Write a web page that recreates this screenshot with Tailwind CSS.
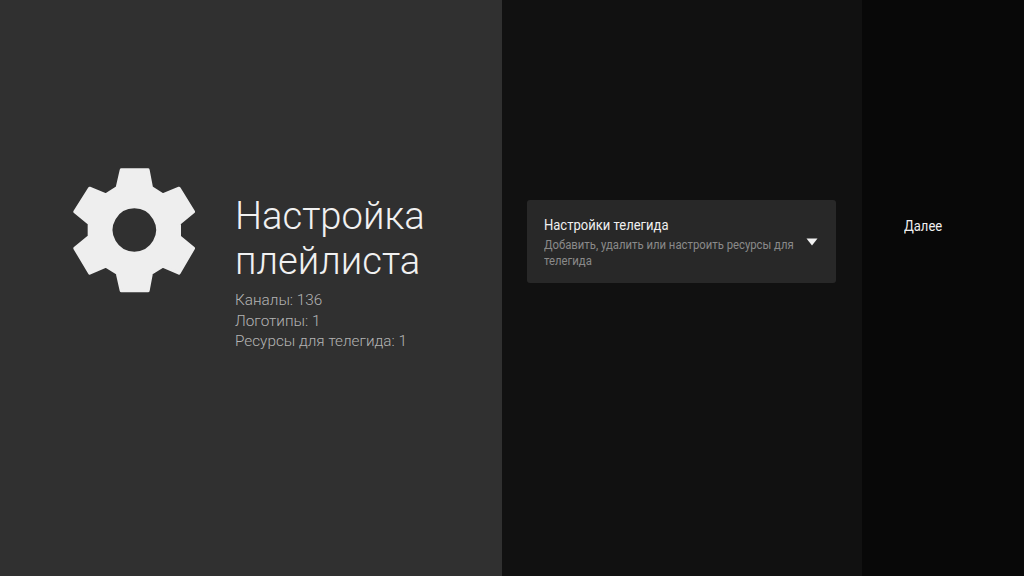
<!DOCTYPE html>
<html lang="ru">
<head>
  <meta charset="UTF-8">
  <title>Настройка плейлиста</title>
  <script src="https://cdn.jsdelivr.net/npm/@tailwindcss/browser@4"></script>
</head>
<body class="bg-black overflow-hidden font-[Roboto,sans-serif]">
<div class="flex w-[1024px] h-[576px]">

  <!-- Guidance -->
  <div class="w-[502px] h-full bg-[#303030] flex items-start pt-[155px] pl-[60px]">
    <svg class="w-[150px] h-[150px] shrink-0" viewBox="0 0 450 450">
      <path fill="#eeeeee" stroke="#eeeeee" stroke-width="10" stroke-linejoin="round" fill-rule="evenodd"
        d="M184 45H264L274 98L308 120L357 100L400 170L358 205V245L400 280L357 354L308 333L274 354L264 407H184L172 354L138 333L89 354L45 280L88 245V205L45 170L89 100L138 120L172 98Z M223 155A70 70 0 1 0 223.01 155Z"/>
    </svg>
    <div class="ml-[25px] pt-[37px]">
      <h1 class="text-[38.2px] leading-[45px] font-light text-[#f1f1f1] pt-[2px]">Настройка<br>плейлиста</h1>
      <div class="mt-[6px] text-[15.3px] leading-[20.5px] font-light text-[#b4b4b4]">
        <p>Каналы: 136</p>
        <p>Логотипы: 1</p>
        <p>Ресурсы для телегида: 1</p>
      </div>
    </div>
  </div>

  <!-- Actions -->
  <div class="w-[360px] h-full bg-[#111111] pt-[200px] pl-[25px]">
    <div class="w-[309px] h-[83px] bg-[#282828] rounded-[3px] flex items-center pl-[17px]">
      <div class="w-[256px] pt-[1px]">
        <p class="w-[280px] text-[14px] leading-[18px] font-normal text-[#f0f0f0] scale-x-[0.93] origin-left">Настройки телегида</p>
        <p class="w-[282px] mt-[3px] text-[12.5px] leading-[16px] text-[#8a8a8a] scale-x-[0.905] origin-left">Добавить, удалить или настроить ресурсы для телегида</p>
      </div>
      <svg class="ml-[6px] w-[12px] h-[8px]" viewBox="0 0 12 8"><path fill="#f2f2f2" d="M0.5 0.5H11.5L6 7.5Z"/></svg>
    </div>
  </div>

  <!-- Next -->
  <div class="flex-1 h-full bg-[#080808] pt-[217px] pl-[42px]">
    <p class="text-[14px] leading-[18px] font-normal text-[#f0f0f0] scale-x-[0.93] origin-left">Далее</p>
  </div>

</div>
</body>
</html>
